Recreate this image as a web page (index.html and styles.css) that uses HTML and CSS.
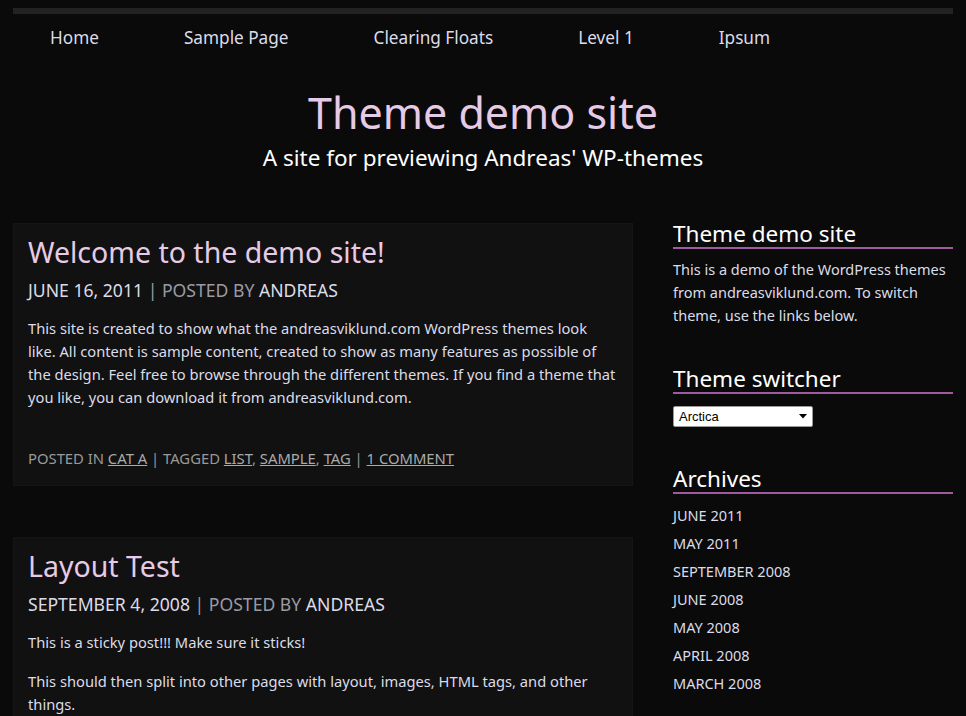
FILE: index.html
```html
<!DOCTYPE html>
<html>
<head>
<meta charset="utf-8">
<link rel="stylesheet" href="styles.css">
</head>
<body>
<div class="wrap">
  <div class="topbar"></div>
  <nav class="nav">
    <a href="#">Home</a>
    <a href="#">Sample Page</a>
    <a href="#">Clearing Floats</a>
    <a href="#">Level 1</a>
    <a href="#">Ipsum</a>
  </nav>
  <header class="header">
    <h1 class="site-title">Theme demo site</h1>
    <p class="site-desc">A site for previewing Andreas' WP-themes</p>
  </header>
  <div class="columns">
    <main class="main">
      <article class="post">
        <h2 class="post-title">Welcome to the demo site!</h2>
        <div class="post-meta">June 16, 2011 <span class="sep">|</span> <span class="dim">Posted by</span> Andreas</div>
        <div class="post-body">
          <p>This site is created to show what the andreasviklund.com WordPress themes look like. All content is sample content, created to show as many features as possible of the design. Feel free to browse through the different themes. If you find a theme that you like, you can download it from andreasviklund.com.</p>
        </div>
        <div class="post-foot">Posted in <a href="#">Cat A</a> | Tagged <a href="#">list</a>, <a href="#">sample</a>, <a href="#">tag</a> | <a href="#">1 Comment</a></div>
      </article>
      <article class="post">
        <h2 class="post-title">Layout Test</h2>
        <div class="post-meta">September 4, 2008 <span class="sep">|</span> <span class="dim">Posted by</span> Andreas</div>
        <div class="post-body">
          <p>This is a sticky post!!! Make sure it sticks!</p>
          <p>This should then split into other pages with layout, images, HTML tags, and other things.</p>
        </div>
      </article>
    </main>
    <aside class="sidebar">
      <section class="widget">
        <h3 class="widget-title">Theme demo site</h3>
        <p class="widget-text">This is a demo of the WordPress themes from andreasviklund.com. To switch theme, use the links below.</p>
      </section>
      <section class="widget">
        <h3 class="widget-title">Theme switcher</h3>
        <div class="select"><span>Arctica</span><svg width="8" height="5" viewBox="0 0 8 5"><path d="M0 0H8L4 4.5Z" fill="#000"/></svg></div>
      </section>
      <section class="widget">
        <h3 class="widget-title">Archives</h3>
        <ul class="archives">
          <li><a href="#">June 2011</a></li>
          <li><a href="#">May 2011</a></li>
          <li><a href="#">September 2008</a></li>
          <li><a href="#">June 2008</a></li>
          <li><a href="#">May 2008</a></li>
          <li><a href="#">April 2008</a></li>
          <li><a href="#">March 2008</a></li>
        </ul>
      </section>
    </aside>
  </div>
</div>
</body>
</html>
```

FILE: styles.css
```css
html, body {
  margin: 0;
  padding: 0;
  background: #0a0a0a;
}
body {
  font-family: "Noto Sans", "DejaVu Sans", sans-serif;
  color: #dcdce8;
  padding-top: 8px;
}
a { color: inherit; text-decoration: none; }
.wrap {
  width: 940px;
  margin-left: 13px;
}
.topbar {
  height: 6px;
  background: #222;
}
.nav {
  display: flex;
  height: 46px;
  align-items: center;
  padding-left: 37px;
  gap: 85px;
  font-size: 17.2px;
  color: #dcdce8;
}
.header {
  text-align: center;
  padding-top: 26px;
}
.site-title {
  margin: 0;
  font-size: 43px;
  font-weight: normal;
  line-height: 54px;
  color: #e6cbe6;
}
.site-desc {
  margin: 0;
  font-size: 22.5px;
  line-height: 36px;
  color: #fff;
}
.columns {
  display: flex;
  gap: 40px;
  margin-top: 47px;
}
.main {
  width: 620px;
  display: flex;
  flex-direction: column;
  gap: 51px;
}
.post {
  background: #111;
  border: 1px solid #151515;
  padding: 8px 14px 15px;
}
.post-title {
  margin: 0;
  font-size: 28.5px;
  font-weight: normal;
  line-height: 40px;
  color: #e6cbe6;
}
.post-meta {
  font-size: 17.6px;
  line-height: 36px;
  text-transform: uppercase;
  color: #dcdce8;
}
.post-meta .sep, .post-meta .dim { color: #9a9aa4; }
.post-body {
  font-size: 14.7px;
  line-height: 23px;
  color: #dcdce8;
  margin-top: 9px;
}
.post-body p { margin: 0 0 16px; }
.post-body p:last-child { margin-bottom: 0; }
.post-foot {
  margin-top: 38px;
  font-size: 14.8px;
  line-height: 23px;
  text-transform: uppercase;
  color: #999;
}
.post-foot a { text-decoration: underline; color: #aaa; }
.sidebar {
  width: 280px;
  margin-top: -2px;
}
.widget { margin-bottom: 39px; }
.widget-title {
  margin: 0;
  font-size: 22.5px;
  font-weight: normal;
  line-height: 26px;
  color: #fff;
  border-bottom: 2px solid #a05aa0;
}
.widget-text {
  margin: 9px 0 0;
  font-size: 14.5px;
  line-height: 23px;
  color: #dcdce8;
}
.select {
  margin-top: 12px;
  height: 19px;
  background: #fff;
  border: 1px solid #999;
  border-radius: 2px;
  display: flex;
  align-items: center;
  justify-content: space-between;
  padding: 0 5px;
  box-sizing: content-box;
  width: 128px;
  font-family: "Liberation Sans", Arial, sans-serif;
  font-size: 13px;
  color: #000;
}
.archives {
  list-style: none;
  margin: 7px 0 0;
  padding: 0;
  font-size: 14.5px;
  line-height: 28px;
  text-transform: uppercase;
  color: #dcdce8;
}
```
